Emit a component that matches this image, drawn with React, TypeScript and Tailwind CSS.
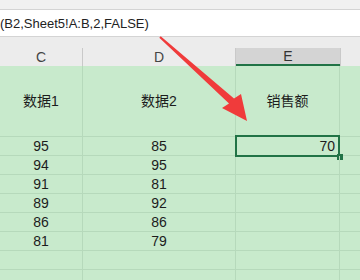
import React from "react";

const rows = [
  ["95", "85"],
  ["94", "95"],
  ["91", "81"],
  ["89", "92"],
  ["86", "86"],
  ["81", "79"],
  ["", ""],
  ["", ""],
];

const font = { fontFamily: '"Liberation Sans", "Noto Sans CJK SC", sans-serif' };

const App = () => {
  return (
    <div className="relative w-[360px] h-[280px] overflow-hidden bg-[#c8eacc]" style={font}>
      {/* toolbar strip */}
      <div className="h-[10px] bg-[#f1f1f1] border-b border-[#d4d4d4]"></div>
      {/* formula bar */}
      <div className="h-[27px] bg-white border-b border-[#d4d4d4] flex items-center">
        <span className="ml-0 text-[13px] text-[#222] leading-none">
          (B2,Sheet5!A:B,2,FALSE)
        </span>
      </div>
      {/* column headers */}
      <div className="h-[29px] bg-[#ececec] pt-[11px]">
        <div className="grid grid-cols-[83px_153px_104px_1fr] h-[18px] text-[14px] text-[#444] leading-none">
          <div className="flex items-center justify-center border-r border-[#c9c9c9]">C</div>
          <div className="flex items-center justify-center border-r border-[#c9c9c9]">D</div>
          <div className="flex items-center justify-center bg-[#d4d4d4] border-b-2 border-[#217346] text-[#333]">
            E
          </div>
          <div className="border-l border-[#c9c9c9]"></div>
        </div>
      </div>
      {/* sheet body */}
      <div className="grid grid-cols-[83px_153px_104px_1fr] text-[14px] text-[#1c1c1c]">
        <div className="h-[71px] flex items-center justify-center border-r border-b border-[#b6d9bb]">数据1</div>
        <div className="h-[71px] flex items-center justify-center border-r border-b border-[#b6d9bb]">数据2</div>
        <div className="h-[71px] flex items-center justify-center border-r border-b border-[#b6d9bb]">销售额</div>
        <div className="h-[71px] border-b border-[#b6d9bb]"></div>
        {rows.map((r, i) => (
          <React.Fragment key={i}>
            <div className="h-[19px] flex items-center justify-center border-r border-b border-[#b6d9bb]">{r[0]}</div>
            <div className="h-[19px] flex items-center justify-center border-r border-b border-[#b6d9bb]">{r[1]}</div>
            <div className="relative h-[19px] flex items-center justify-end pr-[4px] border-r border-b border-[#b6d9bb]">
              {i === 0 && (
                <>
                  <span>70</span>
                  <div className="absolute left-[-1px] top-[-2px] right-[-1px] bottom-[-2px] border-2 border-[#217346]"></div>
                  <div className="absolute right-[-4px] bottom-[-5px] w-[6px] h-[6px] bg-[#217346]"></div>
                </>
              )}
            </div>
            <div className="h-[19px] border-b border-[#b6d9bb]"></div>
          </React.Fragment>
        ))}
      </div>
      {/* red arrow */}
      <svg className="absolute left-0 top-0" width="360" height="280" viewBox="0 0 360 280">
        <polygon
          points="160.7,36.3 234,98.5 241,94 247,121 222,108 229,103.5 159.3,37.7"
          fill="#f03b3b"
        />
      </svg>
    </div>
  );
};

export default App;
